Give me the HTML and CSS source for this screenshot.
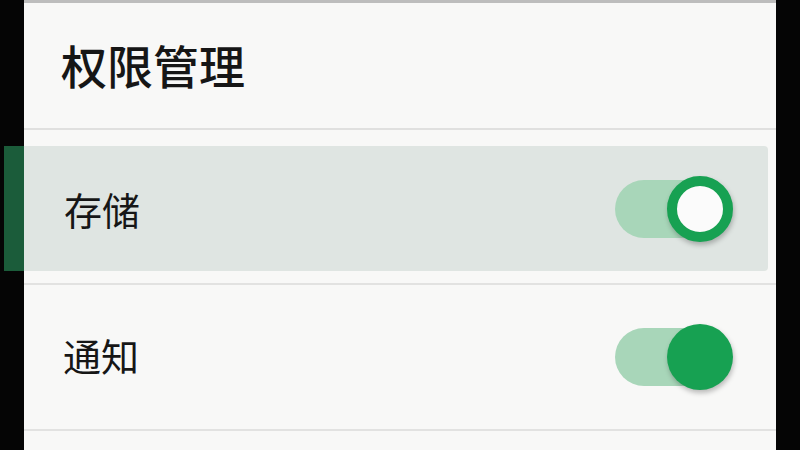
FILE: index.html
```html
<!DOCTYPE html>
<html lang="zh-CN">
<head>
    <meta charset="UTF-8">
    <meta name="viewport" content="width=device-width, initial-scale=1.0">
    <title>权限管理</title>
    <link rel="stylesheet" href="styles.css">
</head>
<body>
    <div class="screen">
        <header class="page-header">
            <h1>权限管理</h1>
        </header>

        <ul class="perm-list">
            <li class="perm-row active">
                <span class="perm-name">存储</span>
                <div class="switch on focused">
                    <span class="track"></span>
                    <span class="knob"></span>
                </div>
            </li>
            <li class="perm-row">
                <span class="perm-name">通知</span>
                <div class="switch on">
                    <span class="track"></span>
                    <span class="knob"></span>
                </div>
            </li>
        </ul>
    </div>
</body>
</html>
```

FILE: styles.css
```css
html, body {
    margin: 0;
    padding: 0;
    height: 100%;
}

body {
    background-color: #050505;
    font-family: "Noto Sans CJK SC", "Noto Sans", sans-serif;
    color: #161616;
    overflow: hidden;
}

.screen {
    margin: 0 24px;
    height: 450px;
    background-color: #f8f8f7;
    border-top: 3px solid #bdbdbd;
    box-sizing: border-box;
}

.page-header {
    height: 127px;
    display: flex;
    align-items: center;
    padding-left: 37px;
    border-bottom: 2px solid #e0e0df;
    box-sizing: border-box;
}

.page-header h1 {
    margin: 0;
    font-size: 46px;
    font-weight: 500;
    line-height: 1;
    padding-bottom: 4px;
}

.perm-list {
    list-style: none;
    margin: 0;
    padding: 0;
}

.perm-row {
    position: relative;
    height: 146px;
    display: flex;
    align-items: center;
    justify-content: space-between;
    padding: 0 43px 0 39px;
    border-bottom: 2px solid #e2e2e1;
    box-sizing: border-box;
}

.perm-row .perm-name {
    top: -2px;
}

/* selected row sits on a tinted card with a bar in the bezel */
.perm-row.active {
    height: 155px;
    padding: 16px 8px 12px 0;
}

.perm-row.active::before {
    content: "";
    position: absolute;
    top: 16px;
    bottom: 12px;
    left: 0;
    right: 8px;
    background-color: #dfe5e2;
    border-radius: 0 4px 4px 0;
}

.perm-row.active::after {
    content: "";
    position: absolute;
    top: 16px;
    bottom: 12px;
    left: -20px;
    width: 20px;
    background-color: #1b5c3a;
}

.perm-row.active .perm-name {
    margin-left: 40px;
    top: 0;
}

.perm-row.active .switch {
    margin-right: 35px;
}

.perm-name {
    position: relative;
    font-size: 38px;
    font-weight: 400;
    line-height: 1;
}

.switch {
    position: relative;
    width: 118px;
    height: 66px;
}

.switch .track {
    position: absolute;
    left: 0;
    top: 4px;
    width: 104px;
    height: 58px;
    border-radius: 29px;
    background-color: #a8d6b9;
}

.switch .knob {
    position: absolute;
    right: 0;
    top: 0;
    width: 66px;
    height: 66px;
    border-radius: 50%;
    background-color: #17a152;
    box-shadow: 1px 3px 5px rgba(0, 0, 0, 0.25);
    box-sizing: border-box;
}

.switch.focused .knob {
    background-color: #fbfbfb;
    border: 10px solid #17a152;
}
```
